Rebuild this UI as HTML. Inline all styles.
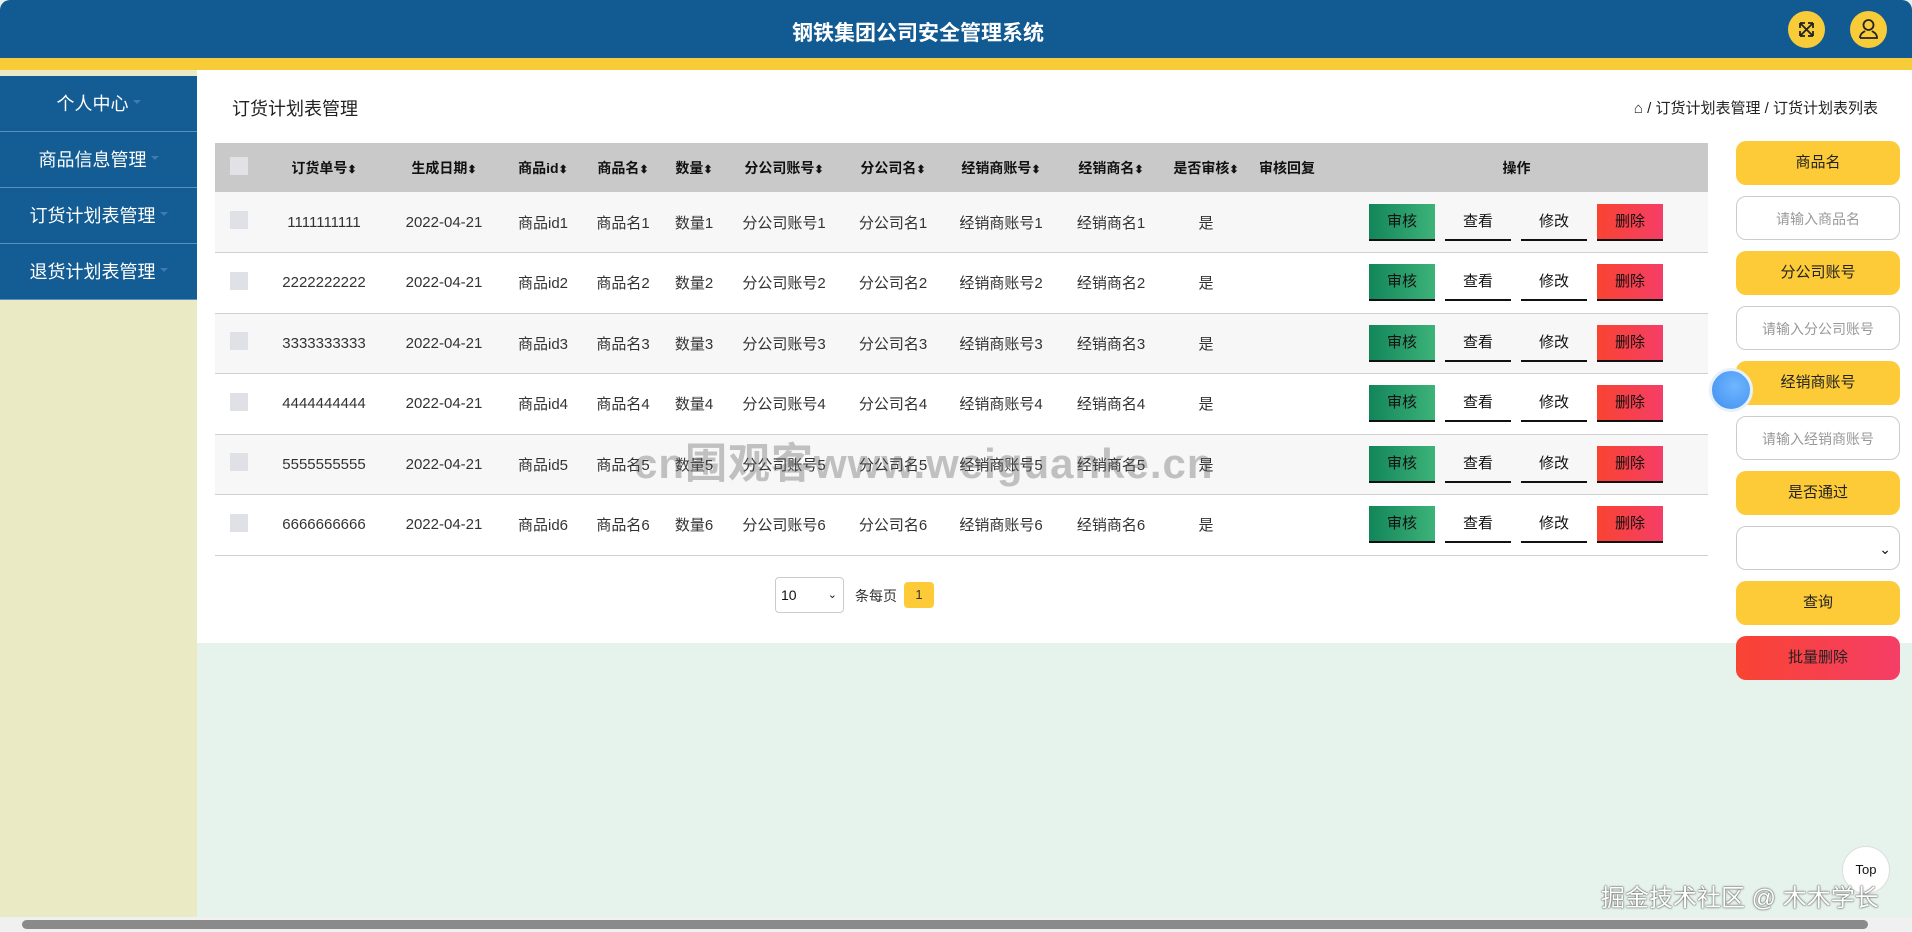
<!DOCTYPE html>
<html><head><meta charset="utf-8"><style>
*{box-sizing:border-box;margin:0;padding:0}
body{width:1912px;height:932px;overflow:hidden;background:#e6f3ec;font-family:"Liberation Sans","Noto Sans CJK SC",sans-serif;position:relative;color:#333}
.hdr{position:absolute;left:0;top:0;width:1912px;height:59px;background:#115a92;border-radius:10px 10px 0 0}
.ybar{position:absolute;left:0;top:58px;width:1912px;height:12px;background:#f8cc38}
.title{position:absolute;left:0;width:1836px;top:17px;text-align:center;color:#fff;font-size:21px;font-weight:bold}
.ic{position:absolute;top:11px;width:37px;height:37px;border-radius:50%;background:#f8cc38}
.side{position:absolute;left:0;top:70px;width:197px;height:847px;background:#eaeac4}
.mi{position:absolute;left:0;width:197px;height:56px;background:#135c94;color:#fff;font-size:18px;text-align:center;line-height:56px;border-bottom:1px solid #5d8fbe}
.mi:after{content:"";display:inline-block;border:4px solid transparent;border-top-color:#3f7ab0;margin-left:4px;vertical-align:2px}
.main{position:absolute;left:197px;top:70px;width:1715px;height:573px;background:#fff}
.h1{position:absolute;left:232px;top:95px;font-size:18px;color:#222}
.bc{position:absolute;right:34px;top:97px;font-size:15px;color:#222}
table{position:absolute;left:215px;top:143px;width:1493px;border-collapse:collapse;font-size:15px}
th{background:#c9c9c9;height:49px;font-size:14px;color:#111;font-weight:bold}
td{height:60.5px;text-align:center;border-bottom:1px solid #d0d0d0;color:#333}
tr:nth-child(even) td{background:#f7f7f7}
tr:nth-child(odd) td{background:#fff}
.cb{display:inline-block;width:18px;height:18px;background:#dfe1e6}
.s:after{content:"⬍";font-size:11px}
.b{display:inline-block;width:66px;height:37px;line-height:35px;font-size:15px;color:#111;margin:0 5px;border-bottom:2px solid #111;vertical-align:middle;text-align:center}
.g{background:linear-gradient(90deg,#12855a,#3db379)}
.r{background:linear-gradient(90deg,#f94332,#f53e66)}
.rp{position:absolute;left:1736px;width:164px;height:44px;border-radius:10px;text-align:center;line-height:44px;font-size:15px}
.y{background:#fccb37;color:#222}
.in{background:#fff;border:1px solid #ccc;color:#999;font-size:14px}
</style></head><body>
<div class="hdr"></div><div class="ybar"></div>
<div class="title">钢铁集团公司安全管理系统</div>
<div class="ic" style="left:1788px"><svg width="37" height="37" viewBox="0 0 37 37" fill="none" stroke="#222" stroke-width="1.8"><path d="M12 12L25 25M25 12L12 25M12 12h5M12 12v5M25 12h-5M25 12v5M12 25h5M12 25v-5M25 25h-5M25 25v-5"/></svg></div>
<div class="ic" style="left:1850px"><svg width="37" height="37" viewBox="0 0 37 37" fill="none" stroke="#222" stroke-width="1.8"><circle cx="18.5" cy="14" r="5"/><path d="M10 27h17c0-5-4-6-5-7M10 27c0-5 4-6 5-7"/></svg></div>
<div class="side"></div>
<div class="mi" style="top:76px">个人中心</div>
<div class="mi" style="top:132px">商品信息管理</div>
<div class="mi" style="top:188px">订货计划表管理</div>
<div class="mi" style="top:244px">退货计划表管理</div>
<div class="main"></div>
<div class="h1">订货计划表管理</div>
<div class="bc">⌂ / 订货计划表管理 / 订货计划表列表</div>
<table>
<tr><th style="width:48px"><span class="cb" style="background:#e2e2e6"></span></th><th class="s" style="width:122px">订货单号</th><th class="s" style="width:118px">生成日期</th><th class="s" style="width:80px">商品id</th><th class="s" style="width:80px">商品名</th><th class="s" style="width:62px">数量</th><th class="s" style="width:118px">分公司账号</th><th class="s" style="width:100px">分公司名</th><th class="s" style="width:116px">经销商账号</th><th class="s" style="width:104px">经销商名</th><th class="s" style="width:86px">是否审核</th><th style="width:76px">审核回复</th><th>操作</th></tr>
<tr><td><span class="cb"></span></td><td>1111111111</td><td>2022-04-21</td><td>商品id1</td><td>商品名1</td><td>数量1</td><td>分公司账号1</td><td>分公司名1</td><td>经销商账号1</td><td>经销商名1</td><td>是</td><td></td><td style="text-align:right;padding-right:40px"><span class="b g">审核</span><span class="b">查看</span><span class="b">修改</span><span class="b r">删除</span></td></tr>
<tr><td><span class="cb"></span></td><td>2222222222</td><td>2022-04-21</td><td>商品id2</td><td>商品名2</td><td>数量2</td><td>分公司账号2</td><td>分公司名2</td><td>经销商账号2</td><td>经销商名2</td><td>是</td><td></td><td style="text-align:right;padding-right:40px"><span class="b g">审核</span><span class="b">查看</span><span class="b">修改</span><span class="b r">删除</span></td></tr>
<tr><td><span class="cb"></span></td><td>3333333333</td><td>2022-04-21</td><td>商品id3</td><td>商品名3</td><td>数量3</td><td>分公司账号3</td><td>分公司名3</td><td>经销商账号3</td><td>经销商名3</td><td>是</td><td></td><td style="text-align:right;padding-right:40px"><span class="b g">审核</span><span class="b">查看</span><span class="b">修改</span><span class="b r">删除</span></td></tr>
<tr><td><span class="cb"></span></td><td>4444444444</td><td>2022-04-21</td><td>商品id4</td><td>商品名4</td><td>数量4</td><td>分公司账号4</td><td>分公司名4</td><td>经销商账号4</td><td>经销商名4</td><td>是</td><td></td><td style="text-align:right;padding-right:40px"><span class="b g">审核</span><span class="b">查看</span><span class="b">修改</span><span class="b r">删除</span></td></tr>
<tr><td><span class="cb"></span></td><td>5555555555</td><td>2022-04-21</td><td>商品id5</td><td>商品名5</td><td>数量5</td><td>分公司账号5</td><td>分公司名5</td><td>经销商账号5</td><td>经销商名5</td><td>是</td><td></td><td style="text-align:right;padding-right:40px"><span class="b g">审核</span><span class="b">查看</span><span class="b">修改</span><span class="b r">删除</span></td></tr>
<tr><td><span class="cb"></span></td><td>6666666666</td><td>2022-04-21</td><td>商品id6</td><td>商品名6</td><td>数量6</td><td>分公司账号6</td><td>分公司名6</td><td>经销商账号6</td><td>经销商名6</td><td>是</td><td></td><td style="text-align:right;padding-right:40px"><span class="b g">审核</span><span class="b">查看</span><span class="b">修改</span><span class="b r">删除</span></td></tr>
</table>
<div style="position:absolute;left:775px;top:577px;width:69px;height:36px;border:1px solid #ccc;border-radius:4px;font-size:14px;line-height:34px;padding-left:5px;color:#111">10<span style="position:absolute;right:6px;font-size:11px">⌄</span></div>
<div style="position:absolute;left:855px;top:586px;font-size:14px;color:#333">条每页</div>
<div style="position:absolute;left:904px;top:582px;width:30px;height:26px;background:#fccb37;border-radius:4px;text-align:center;line-height:26px;font-size:13px">1</div>
<div class="rp y" style="top:141px">商品名</div>
<div class="rp in" style="top:196px">请输入商品名</div>
<div class="rp y" style="top:251px">分公司账号</div>
<div class="rp in" style="top:306px">请输入分公司账号</div>
<div class="rp y" style="top:361px">经销商账号</div>
<div class="rp in" style="top:416px">请输入经销商账号</div>
<div class="rp y" style="top:471px">是否通过</div>
<div class="rp in" style="top:526px;text-align:right;padding-right:8px;color:#111">⌄</div>
<div class="rp y" style="top:581px">查询</div>
<div class="rp" style="top:636px;background:linear-gradient(90deg,#f94332,#f53e66);color:#222">批量删除</div>
<div style="position:absolute;left:1709px;top:368px;width:44px;height:44px;border-radius:50%;background:radial-gradient(circle at 60% 40%,#6fb6ff,#3f8ff0);border:3px solid #e8f0fa"></div>
<div style="position:absolute;left:634px;top:430px;font-size:42px;font-weight:bold;color:rgba(90,90,90,0.35);letter-spacing:1px">cn围观客www.weiguanke.cn</div>
<div style="position:absolute;left:1842px;top:846px;width:48px;height:48px;border-radius:50%;background:#fff;border:1px solid #ddd;font-size:13px;text-align:center;line-height:46px;color:#111">Top</div>
<div style="position:absolute;left:1601px;top:878px;font-size:24px;color:#fff;text-shadow:0 0 2px #555,0 0 1px #333">掘金技术社区 @ 木木学长</div>
<div style="position:absolute;left:0;top:917px;width:1912px;height:15px;background:#f0f0f0"></div>
<div style="position:absolute;left:22px;top:920px;width:1846px;height:9px;border-radius:5px;background:#8a8a8a"></div>
</body></html>
